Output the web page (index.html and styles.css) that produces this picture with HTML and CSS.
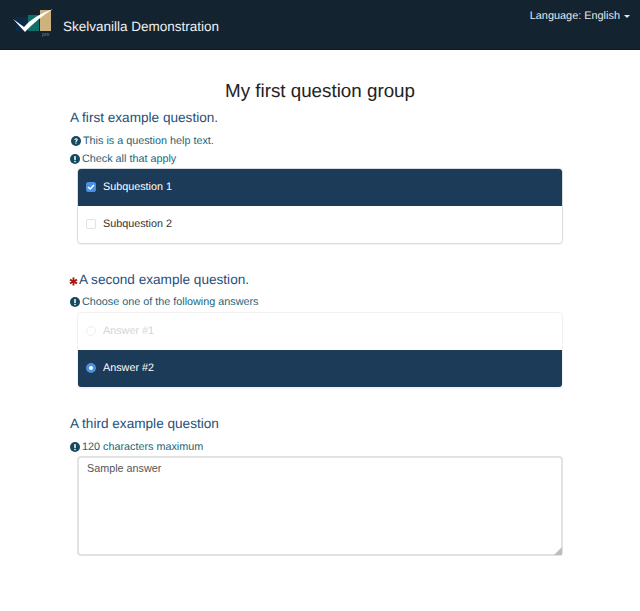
FILE: index.html
```html
<!DOCTYPE html>
<html lang="en">
<head>
<meta charset="utf-8">
<title>Skelvanilla Demonstration</title>
<link rel="stylesheet" href="styles.css">
</head>
<body>
<header class="navbar">
  <div class="brand">
    <svg class="logo" width="42" height="30" viewBox="0 0 42 30">
      <rect x="3" y="8" width="13" height="14" fill="#0d2a4a"/>
      <rect x="15" y="6" width="11" height="16" fill="#0f6f6a"/>
      <rect x="27" y="1" width="11" height="21" fill="#cdb27e"/>
      <path d="M0 10 L11 18 Q20 7 40 0 Q24 10 12 23 Z" fill="#fff"/>
      <text x="29" y="27" class="logo-text">pro</text>
    </svg>
    <span class="brand-name">Skelvanilla Demonstration</span>
  </div>
  <div class="language">Language: English <span class="caret"></span></div>
</header>
<main class="content">
  <h1 class="group-title">My first question group</h1>

  <section class="question first">
    <h2 class="q-title">A first example question.</h2>
    <p class="tip help"><svg class="tip-icon" viewBox="0 0 16 16"><circle cx="8" cy="8" r="8" fill="#14495f"/><path d="M5.2 6.2 Q5.4 3.4 8.2 3.4 Q11 3.5 11 5.7 Q11 7 9.6 7.8 Q8.9 8.3 8.9 9.4 L7 9.4 Q6.9 7.7 8.2 6.9 Q9 6.4 9 5.8 Q8.9 5.1 8 5.1 Q7.1 5.2 7 6.4 Z" fill="#fff"/><rect x="7" y="10.4" width="1.9" height="1.9" fill="#fff"/></svg>This is a question help text.</p>
    <p class="tip"><svg class="tip-icon" viewBox="0 0 16 16"><circle cx="8" cy="8" r="8" fill="#14495f"/><rect x="6.8" y="3" width="2.4" height="6.6" rx=".6" fill="#fff"/><rect x="6.8" y="10.6" width="2.4" height="2.4" rx=".6" fill="#fff"/></svg>Check all that apply</p>
    <div class="card">
      <div class="row selected"><span class="check on"><svg class="tick" viewBox="0 0 10 10"><path d="M2 5 L4.2 7 L8 3" fill="none" stroke="#fff" stroke-width="1.6"/></svg></span>Subquestion 1</div>
      <div class="row"><span class="check"></span>Subquestion 2</div>
    </div>
  </section>

  <section class="question second">
    <h2 class="q-title"><svg class="star" width="9" height="9" viewBox="0 0 10 10"><path d="M3.8 0.5 H6.2 L5.9 3.2 L8.3 2 L9.5 4 L7 5 L9.5 6 L8.3 8 L5.9 6.8 L6.2 9.5 H3.8 L4.1 6.8 L1.7 8 L0.5 6 L3 5 L0.5 4 L1.7 2 L4.1 3.2 Z" fill="#a01c1c"/></svg>A second example question.</h2>
    <p class="tip"><svg class="tip-icon" viewBox="0 0 16 16"><circle cx="8" cy="8" r="8" fill="#14495f"/><rect x="6.8" y="3" width="2.4" height="6.6" rx=".6" fill="#fff"/><rect x="6.8" y="10.6" width="2.4" height="2.4" rx=".6" fill="#fff"/></svg>Choose one of the following answers</p>
    <div class="card faint">
      <div class="row muted"><span class="radio"></span>Answer #1</div>
      <div class="row selected"><span class="radio on"></span>Answer #2</div>
    </div>
  </section>

  <section class="question third">
    <h2 class="q-title">A third example question</h2>
    <p class="tip"><svg class="tip-icon" viewBox="0 0 16 16"><circle cx="8" cy="8" r="8" fill="#14495f"/><rect x="6.8" y="3" width="2.4" height="6.6" rx=".6" fill="#fff"/><rect x="6.8" y="10.6" width="2.4" height="2.4" rx=".6" fill="#fff"/></svg>120 characters maximum</p>
    <div class="answer-wrap">
      <textarea class="answer">Sample answer</textarea>
      <span class="grip"></span>
    </div>
  </section>
</main>
</body>
</html>
```
FILE: styles.css
```css
* { box-sizing: border-box; }
html, body { margin: 0; padding: 0; }
body {
  background: #fff;
  font-family: "Liberation Sans", Arial, sans-serif;
  font-size: 10.8px;
  color: #333;
  height: 611px;
  overflow: hidden;
  text-rendering: geometricPrecision;
}
.navbar {
  height: 50px;
  background: #132330;
  border-bottom: 1px solid #0c171f;
  display: flex;
  justify-content: space-between;
  color: #fff;
}
.brand { display: flex; align-items: center; padding-left: 13px; }
.logo { display: block; margin-right: 8px; margin-top: -2px; flex: none; }
.logo-text { font-size: 5px; fill: #8a8f90; font-family: "Liberation Sans", sans-serif; }
.brand-name { font-size: 13.5px; color: #eef1f2; margin-top: 4px; }
.language { font-size: 10.9px; line-height: 14px; color: #e6e9ea; padding: 9px 10px 0 0; }
.caret {
  display: inline-block;
  width: 0; height: 0;
  margin-left: 1px;
  vertical-align: middle;
  border-top: 3px solid #e6e9ea;
  border-left: 3px solid transparent;
  border-right: 3px solid transparent;
}
.content { padding: 0 77px 0 70px; }
.group-title {
  margin: 29px 0 0;
  font-size: 18.8px;
  font-weight: 400;
  line-height: 24px;
  color: #222;
  text-align: center;
  padding-left: 7px;
}
.question { display: flex; flex-direction: column; }
.question.first { margin-top: 6px; }
.question.second { margin-top: 27px; }
.question.third { margin-top: 27px; }
.q-title {
  margin: 0;
  font-size: 13.6px;
  line-height: 18px;
  font-weight: 400;
  color: #1f5078;
  display: flex;
  align-items: center;
}
.tip {
  margin: 0;
  font-size: 10.8px;
  line-height: 18px;
  color: #1d6478;
  display: flex;
  align-items: center;
}
.q-title + .tip { margin-top: 4px; }
.first .q-title + .tip, .third .q-title + .tip { margin-top: 5px; }
.help { padding-left: 1px; }
.tip-icon { width: 10px; height: 10px; margin-right: 2px; flex: none; }
.star { flex: none; margin: 3px 1px 0 -1px; }
.card {
  margin: 0 0 0 7px;
  border: 1px solid #d9dcdf;
  border-radius: 4px;
  box-shadow: 0 1px 1px rgba(0,0,0,.05);
  overflow: hidden;
  background: #fff;
}
.card.faint { border-color: #f1f1f1; margin-top: 1px; }
.row {
  height: 37px;
  display: flex;
  align-items: center;
  padding-left: 8px;
  padding-bottom: 2px;
  font-size: 10.8px;
  color: #333;
}
.row.selected { background: #1b3b58; color: #fff; }
.row.muted { color: #d4d4d4; }
.check, .radio {
  width: 10px; height: 10px;
  margin-right: 7px;
  flex: none;
  display: flex;
  align-items: center;
  justify-content: center;
  border: 1px solid #dfe3e8;
  background: #fff;
}
.check { border-radius: 2px; }
.check.on { background: #4b8fe0; border-color: #4b8fe0; }
.tick { width: 10px; height: 10px; flex: none; }
.radio { border-radius: 50%; border-color: #eee; }
.radio.on { background: #fff; border: 3px solid #4b8fe0; }
.answer-wrap { position: relative; margin: 0 0 0 7px; }
.answer {
  display: block;
  width: 100%;
  height: 100px;
  padding: 3px 8px;
  font-family: "Liberation Sans", Arial, sans-serif;
  font-size: 10.8px;
  line-height: 15px;
  color: #555;
  border: 2px solid #e2e2e2;
  border-radius: 4px;
  outline: none;
  resize: none;
}
.grip {
  position: absolute;
  right: 1px;
  bottom: 1px;
  width: 0;
  height: 0;
  border-left: 8px solid transparent;
  border-bottom: 8px solid #bdbdbd;
}
```
